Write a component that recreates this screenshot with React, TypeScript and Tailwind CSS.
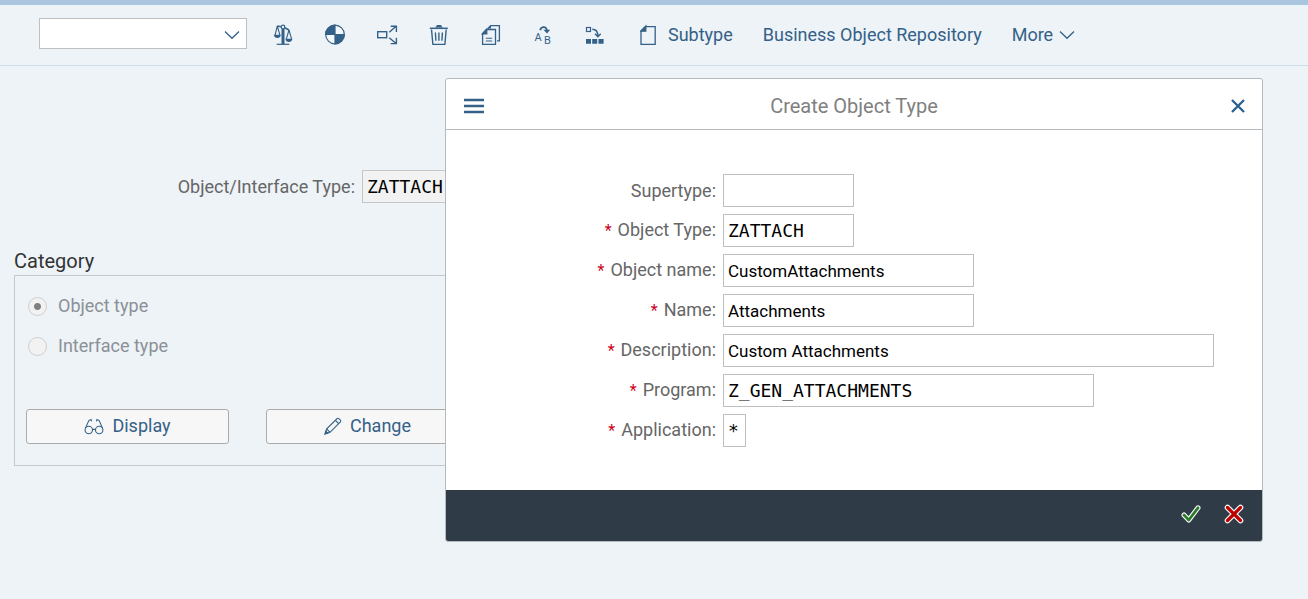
import type { ReactNode } from "react";

const SANS = "font-['Roboto','Liberation_Sans',sans-serif]";
const MONO = "text-[18px] font-['DejaVu_Sans_Mono','Liberation_Mono',monospace]";

function Glyph({ children }: { children: ReactNode }) {
  return (
    <svg
      viewBox="0 0 24 24"
      className="size-6"
      fill="none"
      stroke="currentColor"
      strokeWidth="1.2"
      aria-hidden="true"
    >
      {children}
    </svg>
  );
}

function Chevron() {
  return (
    <svg viewBox="0 0 16 10" className="h-[10px] w-4" fill="none" stroke="currentColor" strokeWidth="1.3" aria-hidden="true">
      <path d="M1 1.5 L8 8.3 L15 1.5" />
    </svg>
  );
}

const tools: { label: string; icon: ReactNode }[] = [
  {
    label: "Compare",
    icon: (
      <Glyph>
        <circle cx="12" cy="4" r="1.8" />
        <path d="M10.2 3.7 L6.3 3 M13.7 4.8 L18 7" strokeWidth="1.6" />
        <path d="M6.3 3 L4 12.3 M6.3 3 L9 12.3 M18 7 L15.3 16.2 M18 7 L20.6 16.2" strokeWidth="1.1" />
        <path d="M2.8 11.8 H9.8 C9.5 14 8.4 15 6.4 15 C4.4 15 3.2 14 2.8 11.8 Z M14.4 15.8 H21.4 C21 18 19.8 19 17.9 19 C16 19 14.7 18 14.4 15.8 Z" fill="currentColor" stroke="none" />
        <path d="M12 6 V21" strokeWidth="3" />
        <path d="M5.7 21.3 H18.3" strokeWidth="1.2" />
      </Glyph>
    ),
  },
  {
    label: "Test",
    icon: (
      <Glyph>
        <circle cx="12" cy="11.5" r="9.3" fill="#fff" fillOpacity="0.4" />
        <path d="M12 11.5 V2.2 A9.3 9.3 0 0 0 2.7 11.5 Z M12 11.5 V20.8 A9.3 9.3 0 0 0 21.3 11.5 Z" fill="currentColor" />
      </Glyph>
    ),
  },
  {
    label: "Where-used",
    icon: (
      <Glyph>
        <rect x="2.7" y="8.7" width="9" height="6" strokeWidth="1.4" />
        <path d="M14.3 9.2 L21.3 3 M15.7 3.2 H21.4 V9 M14.3 14.8 L21.3 20.8 M15.7 20.6 H21.4 V14.8" strokeWidth="1.4" />
      </Glyph>
    ),
  },
  {
    label: "Delete",
    icon: (
      <Glyph>
        <path d="M2.8 5.3 H20.8" strokeWidth="1.5" />
        <path d="M8 4.6 C9 4.2 9.4 2 10.5 2 H13.5 C14.6 2 15 4.2 16 4.6 Z" fill="currentColor" stroke="none" />
        <path d="M4.5 6.5 L5.9 21.4 H17.9 L19.2 6.5" strokeWidth="1.4" />
        <path d="M8.4 9.5 L8.9 17.8 M11.9 9.5 V17.8 M15.4 9.5 L14.9 17.8" strokeWidth="1.4" />
      </Glyph>
    ),
  },
  {
    label: "Copy",
    icon: (
      <Glyph>
        <path d="M7.5 6.5 H16.5 V21.4 H3.6 V10.8 Z" strokeWidth="1.3" />
        <path d="M3.2 11 L7.8 6 V11 Z" fill="currentColor" />
        <path d="M6.8 15.2 H13.2 M6.8 18 H13.2" strokeWidth="1.1" />
        <path d="M9 5.5 L11.6 2.6 H20.4 V17.8 H18" strokeWidth="1.3" />
        <path d="M8.4 5.6 L12 2.2 V5.6 Z" fill="currentColor" stroke="none" />
      </Glyph>
    ),
  },
  {
    label: "Rename",
    icon: (
      <Glyph>
        <text x="3.5" y="18" fontSize="11" fill="currentColor" stroke="none">A</text>
        <text x="13" y="20.6" fontSize="11" fill="currentColor" stroke="none">B</text>
        <path d="M9.2 7.2 C10 3.4 15.5 2.6 16 8" strokeWidth="1.7" />
        <path d="M12.4 6.8 H19.2 L16 10.4 Z" fill="currentColor" stroke="none" />
      </Glyph>
    ),
  },
  {
    label: "Hierarchy",
    icon: (
      <Glyph>
        <rect x="3.5" y="4.5" width="4" height="4" />
        <path d="M9.3 6.2 C12.6 6.2 14.8 8.2 14.9 13 M12 10.8 L14.9 13.8 L17.7 10.8" strokeWidth="1.4" />
        <path d="M3 16 H8 V20.8 H3 Z M9.2 16 H14.2 V20.8 H9.2 Z M15.5 16 H20.6 V20.8 H15.5 Z" fill="currentColor" stroke="none" />
      </Glyph>
    ),
  },
];

type Field = { id: string; label: string; value: string; width: string; mono?: boolean; required?: boolean };

const fields: Field[] = [
  { id: "supertype", label: "Supertype:", value: "", width: "w-[131px]" },
  { id: "object-type", label: "Object Type:", value: "ZATTACH", width: "w-[131px]", mono: true, required: true },
  { id: "object-name", label: "Object name:", value: "CustomAttachments", width: "w-[251px]", required: true },
  { id: "name", label: "Name:", value: "Attachments", width: "w-[251px]", required: true },
  { id: "description", label: "Description:", value: "Custom Attachments", width: "w-[491px]", required: true },
  { id: "program", label: "Program:", value: "Z_GEN_ATTACHMENTS", width: "w-[371px]", mono: true, required: true },
  { id: "application", label: "Application:", value: "*", width: "w-[23px]", mono: true, required: true },
];

function Toolbar() {
  return (
    <header className="flex h-[61px] items-start border-b border-[#cfdde8] pt-[13px] pl-[39px] text-[#346187]">
      <div className="relative mr-6 shrink-0">
        <select aria-label="Command" className="block h-[31px] w-52 appearance-none border border-[#bfbfbf] bg-white px-2">
          <option></option>
        </select>
        <span className="pointer-events-none absolute top-3 right-[7px]">
          <Chevron />
        </span>
      </div>
      <div className="flex shrink-0 gap-7">
        {tools.map((tool) => (
          <button key={tool.label} type="button" aria-label={tool.label} className="flex h-[34px] items-center">
            {tool.icon}
          </button>
        ))}
      </div>
      <div className="ml-[33px] flex shrink-0 gap-[30px] whitespace-nowrap">
        <button type="button" className="flex h-[34px] items-center gap-3">
          <svg viewBox="0 0 16 24" className="h-6 w-4" fill="none" stroke="currentColor" strokeWidth="1.3" aria-hidden="true">
            <path d="M5.5 3.6 H15.2 V21.4 H1 V8 Z" />
            <path d="M0.8 8.2 L5.8 3 V8.2 Z" fill="currentColor" />
          </svg>
          Subtype
        </button>
        <button type="button" className="h-[34px]">Business Object Repository</button>
        <button type="button" className="flex h-[34px] items-center gap-[6px]">
          More
          <Chevron />
        </button>
      </div>
    </header>
  );
}

function RadioRow({ label, checked }: { label: string; checked?: boolean }) {
  return (
    <label className="flex h-10 items-center gap-[11px] text-[#8b9096]">
      <input
        type="radio"
        name="category"
        disabled
        defaultChecked={checked}
        className="size-[19px] appearance-none rounded-full border border-[#cfcfcf] bg-[#f2f2f2] checked:bg-[radial-gradient(circle,#808080_3px,#f2f2f2_4px)]"
      />
      {label}
    </label>
  );
}

function Page() {
  const action =
    "flex h-[35px] w-[203px] shrink-0 items-center justify-center gap-2 rounded-[3px] border border-[#ababab] bg-[#f7f7f7] pb-[2px] text-[#346187]";
  return (
    <main className="pt-[104px] pl-[14px]">
      <div className="flex items-center gap-[7px]">
        <label htmlFor="interface-type" className="w-[341px] text-right text-[#666]">Object/Interface Type:</label>
        <input
          id="interface-type"
          readOnly
          value="ZATTACH"
          className={`h-[33px] w-[131px] border border-[#c6c6c6] bg-[#f2f2f2] px-1 text-black ${MONO}`}
        />
      </div>
      <h2 className="mt-11 text-[20px] leading-7 text-[#333]">Category</h2>
      <section className="w-[722px] max-w-full border border-[#c4c8cb] px-[11px] pt-[10px] pb-[21px]">
        <div className="px-[2px]">
          <RadioRow label="Object type" checked />
          <RadioRow label="Interface type" />
        </div>
        <div className="mt-[43px] flex gap-[37px]">
          <button type="button" className={action}>
            <svg viewBox="0 0 20 18" className="h-[18px] w-5" fill="none" stroke="currentColor" strokeWidth="1.1" aria-hidden="true">
              <circle cx="4.8" cy="13" r="3.7" />
              <circle cx="15.2" cy="13" r="3.7" />
              <path d="M8.4 12.4 H11.6 M1.4 11.4 L4.8 3.6 L7 2.6 L7.6 4.4 M18.6 11.4 L15.2 3.6 L13 2.6 L12.4 4.4" />
            </svg>
            Display
          </button>
          <button type="button" className={action}>
            <svg viewBox="0 0 18 18" className="size-[18px]" fill="none" stroke="currentColor" strokeWidth="1.1" aria-hidden="true">
              <path d="M1.2 16.8 L2.7 11.8 L13.2 1.5 Q14 0.9 14.8 1.6 L16.4 3.2 Q17.1 4 16.4 4.8 L6 15.3 Z" />
              <path d="M11.4 3.3 L14.6 6.5 M2.7 11.8 L6 15.3" />
              <path d="M1 17 L1.8 14.2 L3.8 16.1 Z" fill="currentColor" />
            </svg>
            Change
          </button>
        </div>
      </section>
    </main>
  );
}

function CreateDialog() {
  return (
    <div
      role="dialog"
      aria-labelledby="dialog-title"
      className="absolute top-[73px] right-[45px] left-[445px] overflow-hidden rounded-[3px] border border-[#b5babf] bg-white"
    >
      <div className="grid h-[51px] grid-cols-[1fr_auto_1fr] items-center border-b border-[#b5babf] px-[17px] pt-[3px]">
        <button type="button" aria-label="Menu" className="justify-self-start text-[#346187]">
          <svg viewBox="0 0 22 20" className="h-5 w-[22px]" stroke="currentColor" strokeWidth="2.5" aria-hidden="true">
            <path d="M1 4 H21 M1 10 H21 M1 16 H21" />
          </svg>
        </button>
        <h1 id="dialog-title" className="text-[20px] leading-7 text-[#808080]">Create Object Type</h1>
        <button type="button" aria-label="Close" className="justify-self-end text-[#286090]">
          <svg viewBox="0 0 14 14" className="size-[14px]" stroke="currentColor" strokeWidth="2.3" aria-hidden="true">
            <path d="M1 1 L13 13 M13 1 L1 13" />
          </svg>
        </button>
      </div>
      <form className="flex flex-col gap-[7px] pt-11 pb-[43px]">
        {fields.map((field) => (
          <div key={field.id} className="flex items-center gap-[7px]">
            <label htmlFor={field.id} className="w-[270px] shrink-0 text-right text-[#666]">
              {field.required && <span className="mr-[6px] text-[16px] text-[#cc0022]">*</span>}
              {field.label}
            </label>
            <input
              id={field.id}
              defaultValue={field.value}
              className={`h-[33px] border border-[#bfbfbf] bg-white px-1 text-black ${field.width} ${field.mono ? MONO : "text-[17px]"}`}
            />
          </div>
        ))}
      </form>
      <div className="flex h-[51px] items-center justify-end gap-[21px] bg-[#2f3c48] pr-[17px] pb-[3px]">
        <button type="button" aria-label="Continue">
          <svg viewBox="0 0 22 22" className="size-[22px]" fill="none" strokeLinecap="round" strokeLinejoin="round" aria-hidden="true">
            <path d="M4 12 L8.8 17 L18 4.8" stroke="#fff" strokeWidth="5" />
            <path d="M4 12 L8.8 17 L18 4.8" stroke="#2b7d2b" strokeWidth="2.8" />
          </svg>
        </button>
        <button type="button" aria-label="Cancel">
          <svg viewBox="0 0 22 22" className="size-[22px]" fill="none" strokeLinecap="round" aria-hidden="true">
            <path d="M4.5 4.5 L17.5 17.5 M17.5 4.5 L4.5 17.5" stroke="#fff" strokeWidth="5.6" />
            <path d="M4.5 4.5 L17.5 17.5 M17.5 4.5 L4.5 17.5" stroke="#bb0000" strokeWidth="3.2" />
          </svg>
        </button>
      </div>
    </div>
  );
}

export default function App() {
  return (
    <div className={`relative min-h-screen overflow-hidden border-t-[5px] border-[#a9c6de] bg-[#eef3f8] text-[18px] leading-6 ${SANS}`}>
      <Toolbar />
      <Page />
      <CreateDialog />
    </div>
  );
}
